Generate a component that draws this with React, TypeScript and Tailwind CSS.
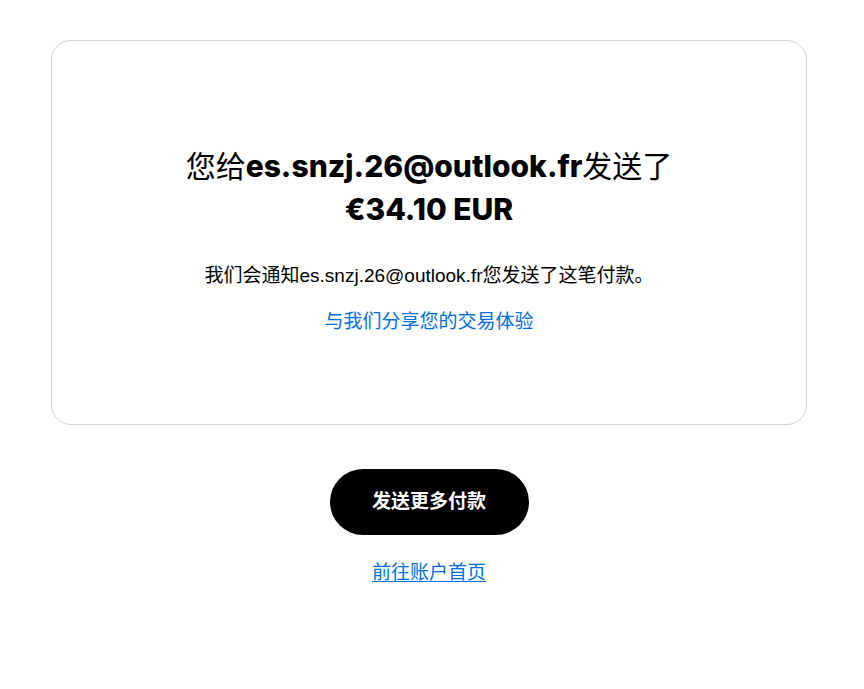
import React from "react";

const sans = "font-['Liberation_Sans','Noto_Sans_CJK_SC',sans-serif]";
const bold = "font-['Inter','Noto_Sans_CJK_SC',sans-serif]";

const App = () => {
  return (
    <div className={`min-h-[689px] w-[864px] bg-white ${sans}`}>
      <div className="w-[858px] px-[51px] pt-[40px] flex flex-col items-center">
        <div className="w-full rounded-[20px] border border-[#d2d2d2] pt-[104px] pb-[89px] flex flex-col items-center">
          <h1 className="text-center text-[30px] leading-[42px] text-black font-normal">
            您给<span className={`${bold} font-extrabold`}>es.snzj.26@outlook.fr</span>发送了
            <br />
            <span className={`${bold} font-extrabold`}>€34.10 EUR</span>
          </h1>
          <p className="mt-[31px] text-[19px] leading-[27px] text-black">
            我们会通知es.snzj.26@outlook.fr您发送了这笔付款。
          </p>
          <a href="#" className="mt-[19px] text-[19px] leading-[27px] text-[#0070e0]">
            与我们分享您的交易体验
          </a>
        </div>

        <button className="mt-[44px] h-[66px] w-[199px] rounded-full bg-black text-white text-[19px] font-bold">
          发送更多付款
        </button>
        <a href="#" className="mt-[24px] text-[19px] leading-[27px] text-[#0070e0] underline underline-offset-2">
          前往账户首页
        </a>
      </div>
    </div>
  );
};

export default App;
